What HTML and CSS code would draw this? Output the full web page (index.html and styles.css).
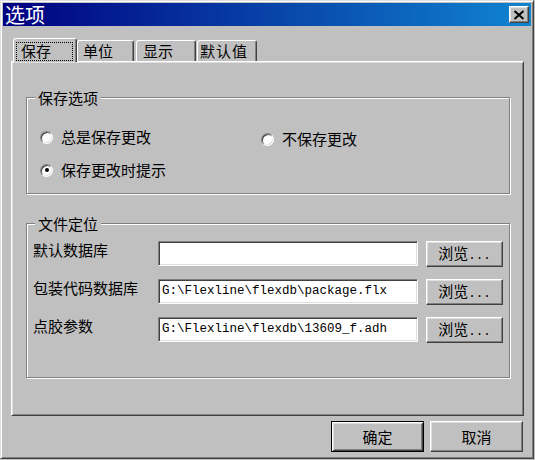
FILE: index.html
```html
<!DOCTYPE html>
<html lang="zh-CN">
<head>
<meta charset="utf-8">
<title>选项</title>
<link rel="stylesheet" href="styles.css">
</head>
<body>
<div class="window">
  <div class="titlebar">
    <span class="title">选项</span>
    <div class="close">
      <svg width="12" height="10" viewBox="0 0 12 10"><path d="M1.5 1 L10.5 9 M10.5 1 L1.5 9" stroke="#000" stroke-width="2" fill="none"/></svg>
    </div>
  </div>
  <div class="tabs">
    <div class="tab tab-active"><span class="focus">保存</span></div>
    <div class="tab tab-2">单位</div>
    <div class="tab tab-3">显示</div>
    <div class="tab tab-4">默认值</div>
  </div>
  <div class="panel">
    <div class="group group-save">
      <div class="legend">保存选项</div>
      <div class="radios">
        <div class="opt"><span class="radio"></span>总是保存更改</div>
        <div class="opt opt-low"><span class="radio"></span>不保存更改</div>
        <div class="opt"><span class="radio radio-on"></span>保存更改时提示</div>
      </div>
    </div>
    <div class="group group-files">
      <div class="legend">文件定位</div>
      <div class="rows">
        <div class="row">
          <span class="lbl">默认数据库</span>
          <div class="field"></div>
          <div class="btn browse"><span>浏览<span class="dots">...</span></span></div>
        </div>
        <div class="row">
          <span class="lbl">包装代码数据库</span>
          <div class="field">G:\Flexline\flexdb\package.flx</div>
          <div class="btn browse"><span>浏览<span class="dots">...</span></span></div>
        </div>
        <div class="row">
          <span class="lbl">点胶参数</span>
          <div class="field">G:\Flexline\flexdb\13609_f.adh</div>
          <div class="btn browse"><span>浏览<span class="dots">...</span></span></div>
        </div>
      </div>
    </div>
  </div>
  <div class="actions">
    <div class="btn act btn-default">确定</div>
    <div class="btn act">取消</div>
  </div>
</div>
</body>
</html>
```
FILE: styles.css
```css
body {
  margin: 0;
  background: #c0c0c0;
  font-family: "Noto Sans CJK SC", sans-serif;
  font-size: 15px;
  color: #000;
}

.window {
  width: 534px;
  height: 459px;
  box-sizing: border-box;
  border: 1px solid;
  border-color: #dfdfdf #404040 #404040 #dfdfdf;
  box-shadow: inset 1px 1px #fff, inset -1px -1px #808080;
  padding: 2px;
  display: flex;
  flex-direction: column;
  background: #c0c0c0;
}

.titlebar {
  flex: none;
  height: 23px;
  display: flex;
  align-items: center;
  justify-content: space-between;
  padding: 0 2px;
  background: linear-gradient(to right, #000080, #1084d0);
}

.title {
  color: #fff;
  font-size: 20px;
  line-height: 23px;
}

.close {
  width: 20px;
  height: 17px;
  box-sizing: border-box;
  border: 1px solid;
  border-color: #fff #404040 #404040 #fff;
  box-shadow: inset -1px -1px #808080, inset 1px 1px #dfdfdf;
  background: #c0c0c0;
  display: flex;
  align-items: center;
  justify-content: center;
}

.tabs {
  flex: none;
  display: flex;
  align-items: flex-end;
  height: 23px;
  margin: 12px 0 0 8px;
}

.tab {
  box-sizing: border-box;
  height: 21px;
  border: 1px solid;
  border-bottom: none;
  border-color: #fff #404040 transparent #fff;
  border-radius: 3px 3px 0 0;
  box-shadow: inset -1px 0 #808080;
  line-height: 20px;
  white-space: nowrap;
  background: #c0c0c0;
}

.tab-active {
  position: relative;
  z-index: 1;
  width: 64px;
  height: 24px;
  margin-left: 2px;
  margin-bottom: -1px;
  padding: 3px 0 0 2px;
}

.focus {
  display: block;
  box-sizing: border-box;
  width: 57px;
  height: 19px;
  border: 1px dotted #000;
  padding-left: 4px;
  line-height: 15px;
}

.tab-2 {
  width: 57px;
  padding-left: 5px;
}

.tab-3 {
  width: 60px;
  margin-left: 2px;
  padding-left: 6px;
}

.tab-4 {
  width: 60px;
  margin-left: 1px;
  padding-left: 2px;
  letter-spacing: 1px;
}

.panel {
  flex: none;
  box-sizing: border-box;
  height: 355px;
  margin: 0 7px 0 8px;
  border: 1px solid;
  border-color: #fff #404040 #404040 #fff;
  box-shadow: inset 1px 1px #dfdfdf, inset -1px -1px #808080;
  padding: 35px 0 0 14px;
}

.group {
  box-sizing: border-box;
  width: 484px;
  border: 1px solid #808080;
  box-shadow: inset 1px 1px #fff, 1px 1px #fff;
}

.group-save {
  height: 97px;
}

.group-files {
  height: 155px;
  margin-top: 29px;
}

.legend {
  width: fit-content;
  height: 15px;
  line-height: 15px;
  margin: -8px 0 0 8px;
  padding: 0 3px;
  background: #c0c0c0;
}

.radios {
  display: grid;
  grid-template-columns: 221px auto;
  grid-template-rows: 20px 20px;
  row-gap: 13px;
  margin-top: 22px;
  padding-left: 13px;
}

.opt {
  display: flex;
  align-items: center;
  gap: 8px;
  height: 20px;
  line-height: 20px;
  white-space: nowrap;
}

.opt-low {
  margin-top: 2px;
}

.radio {
  flex: none;
  width: 13px;
  height: 13px;
  box-sizing: border-box;
  border-radius: 50%;
  background: #fff;
  border: 1px solid;
  border-color: #808080 #fff #fff #808080;
  box-shadow: inset 1px 1px #404040, inset -1px -1px #dfdfdf;
  display: flex;
  align-items: center;
  justify-content: center;
}

.radio-on::after {
  content: "";
  width: 4px;
  height: 4px;
  border-radius: 50%;
  background: #000;
}

.rows {
  display: flex;
  flex-direction: column;
  gap: 12px;
  margin-top: 10px;
  padding-left: 6px;
}

.row {
  display: flex;
  align-items: flex-start;
  height: 26px;
}

.lbl {
  flex: none;
  width: 125px;
  line-height: 15px;
  padding-top: 1px;
  white-space: nowrap;
}

.field {
  flex: none;
  width: 260px;
  height: 25px;
  box-sizing: border-box;
  background: #fff;
  border: 1px solid;
  border-color: #808080 #fff #fff #808080;
  box-shadow: inset 1px 1px #404040, inset -1px -1px #dfdfdf;
  font-family: "Liberation Mono", monospace;
  font-size: 12.5px;
  line-height: 23px;
  padding-left: 3px;
  white-space: nowrap;
  overflow: hidden;
}

.btn {
  box-sizing: border-box;
  display: flex;
  align-items: center;
  justify-content: center;
  border: 1px solid;
  border-color: #fff #404040 #404040 #fff;
  box-shadow: inset -1px -1px #808080, inset 1px 1px #dfdfdf;
  line-height: 15px;
  white-space: nowrap;
}

.browse {
  flex: none;
  width: 77px;
  height: 26px;
  margin-left: 8px;
}

.dots {
  font-family: "Liberation Mono", monospace;
  font-size: 12.5px;
}

.actions {
  flex: none;
  display: flex;
  justify-content: flex-end;
  gap: 6px;
  margin-top: 5px;
  padding-right: 8px;
}

.act {
  width: 93px;
  height: 31px;
}

.btn-default {
  border-color: #000;
  box-shadow: inset 1px 1px #fff, inset -1px -1px #404040, inset 2px 2px #dfdfdf, inset -2px -2px #808080;
}
```
